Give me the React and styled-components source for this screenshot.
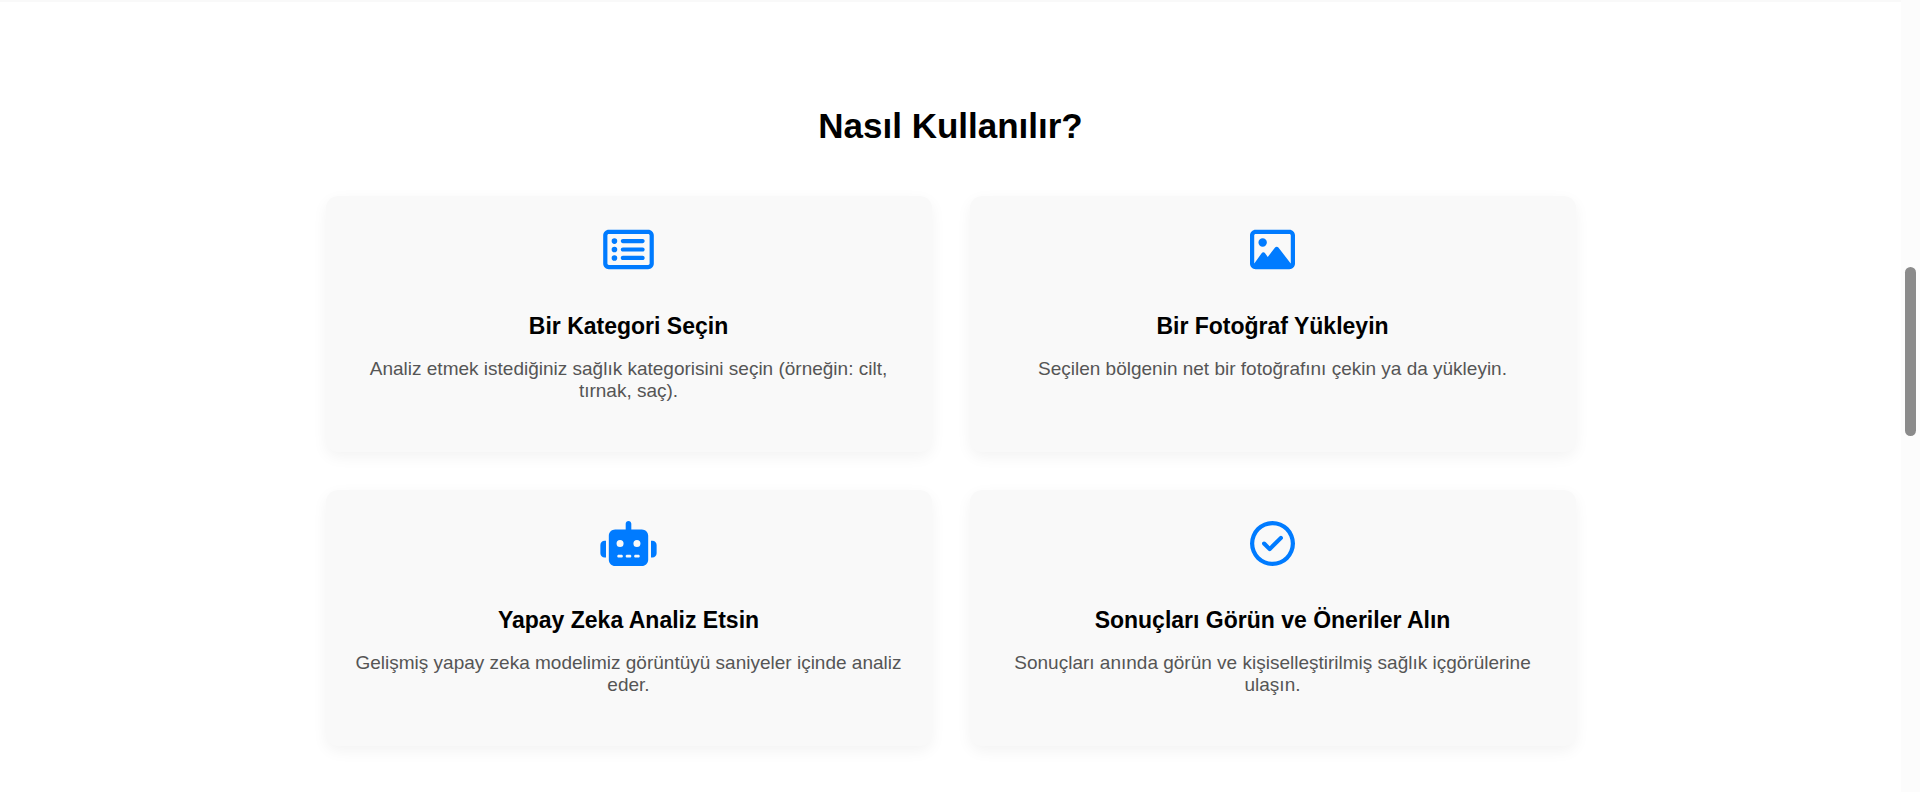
import React from "react";
import styled, { createGlobalStyle } from "styled-components";
import {
  FaRegRectangleList,
  FaRegImage,
  FaRobot,
  FaRegCircleCheck,
} from "react-icons/fa6";

const GlobalStyle = createGlobalStyle`
  *, *::before, *::after { box-sizing: border-box; }
  body {
    margin: 0;
    background: #fff;
    color: #000;
    font-family: "Liberation Sans", Arial, sans-serif;
  }
`;

const Page = styled.div`
  display: flex;
  min-height: 100vh;
`;

const HowTo = styled.main`
  flex: 1;
  min-width: 0;
  padding: 104px 24px 46px;
  border-top: 2px solid #f9f9f9;
  text-align: center;
`;

const Heading = styled.h2`
  margin: 0 0 50px;
  font-size: 35px;
  line-height: 40px;
`;

const Steps = styled.div`
  display: grid;
  grid-template-columns: repeat(2, minmax(0, 1fr));
  gap: 38px;
  max-width: 1250px;
  margin: 0 auto;

  @media (max-width: 800px) {
    grid-template-columns: minmax(0, 1fr);
  }
`;

const Card = styled.article`
  display: flex;
  flex-direction: column;
  align-items: center;
  padding: 31px 30px 50px;
  border-radius: 12px;
  background: #f9f9f9;
  box-shadow: 0 5px 15px rgba(0, 0, 0, 0.05);
`;

const StepIcon = styled.div`
  display: flex;
  margin-bottom: 40px;
  color: #007bff;

  svg {
    width: 57px;
    height: 45px;
  }
`;

const StepTitle = styled.h3`
  margin: 0 0 18px;
  font-size: 23px;
  line-height: 28px;
`;

const StepText = styled.p`
  margin: 0;
  font-size: 19px;
  line-height: 22px;
  color: #555;
`;

const ScrollRail = styled.div`
  flex: none;
  width: 19px;
  padding: 267px 4px 0;
  background: #fcfcfc;
`;

const ScrollThumb = styled.div`
  height: 169px;
  border-radius: 6px;
  background: #8b8b8b;
`;

const steps = [
  {
    Icon: FaRegRectangleList,
    title: "Bir Kategori Seçin",
    text: "Analiz etmek istediğiniz sağlık kategorisini seçin (örneğin: cilt, tırnak, saç).",
  },
  {
    Icon: FaRegImage,
    title: "Bir Fotoğraf Yükleyin",
    text: "Seçilen bölgenin net bir fotoğrafını çekin ya da yükleyin.",
  },
  {
    Icon: FaRobot,
    title: "Yapay Zeka Analiz Etsin",
    text: "Gelişmiş yapay zeka modelimiz görüntüyü saniyeler içinde analiz eder.",
  },
  {
    Icon: FaRegCircleCheck,
    title: "Sonuçları Görün ve Öneriler Alın",
    text: "Sonuçları anında görün ve kişiselleştirilmiş sağlık içgörülerine ulaşın.",
  },
];

export default function App() {
  return (
    <>
      <GlobalStyle />
      <Page>
        <HowTo>
          <Heading>Nasıl Kullanılır?</Heading>
          <Steps>
            {steps.map(({ Icon, title, text }) => (
              <Card key={title}>
                <StepIcon>
                  <Icon aria-hidden="true" />
                </StepIcon>
                <StepTitle>{title}</StepTitle>
                <StepText>{text}</StepText>
              </Card>
            ))}
          </Steps>
        </HowTo>
        <ScrollRail aria-hidden="true">
          <ScrollThumb />
        </ScrollRail>
      </Page>
    </>
  );
}
